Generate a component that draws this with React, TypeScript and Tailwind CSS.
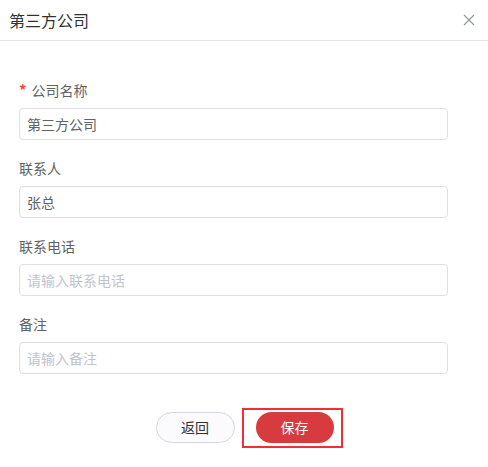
import React from "react";

const FONT = { fontFamily: '"Noto Sans CJK SC", "Noto Sans", sans-serif' };

interface FieldProps {
  label: string;
  value?: string;
  placeholder?: string;
  required?: boolean;
}

function Field({ label, value, placeholder, required }: FieldProps) {
  return (
    <div className="mb-[17px]">
      <div className="flex h-[22px] items-center text-[14px] leading-[22px] text-[#606266]">
        {required && <span className="mr-[5px] text-[15px] font-bold text-[#ee4a2c]">*</span>}
        {label}
      </div>
      <div className="mt-[7px] flex h-8 items-center rounded-[4px] border border-[#dcdfe6] bg-white px-[7px] text-[14px]">
        {value ? (
          <span className="text-[#606266]">{value}</span>
        ) : (
          <span className="text-[#c0c4cc]">{placeholder}</span>
        )}
      </div>
    </div>
  );
}

export default function App() {
  return (
    <div className="h-[467px] w-[488px] overflow-hidden bg-white" style={FONT}>
      <div className="flex h-[41px] items-center justify-between border-b border-[#e8e8e8] pl-[9px] pr-[13px]">
        <span className="text-[16px] text-[#303133]">第三方公司</span>
        <svg width="12" height="12" viewBox="0 0 12 12" className="text-[#909399]">
          <path d="M1 1L11 11M11 1L1 11" stroke="currentColor" strokeWidth="1.1" fill="none" />
        </svg>
      </div>

      <div className="pl-[19px] pr-[40px] pt-[38px]">
        <Field label="公司名称" value="第三方公司" required />
        <Field label="联系人" value="张总" />
        <Field label="联系电话" placeholder="请输入联系电话" />
        <Field label="备注" placeholder="请输入备注" />
      </div>

      <div className="mt-[38px] flex justify-center gap-[21px] pl-[1px]">
        <button className="h-[31px] w-[79px] rounded-full border border-[#d8d5e3] bg-[#fbfafd] text-[14px] text-[#303133]">
          返回
        </button>
        <div className="relative">
          <button className="h-[31px] w-[78px] rounded-full bg-[#d73a3f] text-[14px] text-white">
            保存
          </button>
          <div className="pointer-events-none absolute -bottom-[5px] -left-[14px] -right-[9px] -top-[4px] border-2 border-[#f02e34]" />
        </div>
      </div>
    </div>
  );
}
